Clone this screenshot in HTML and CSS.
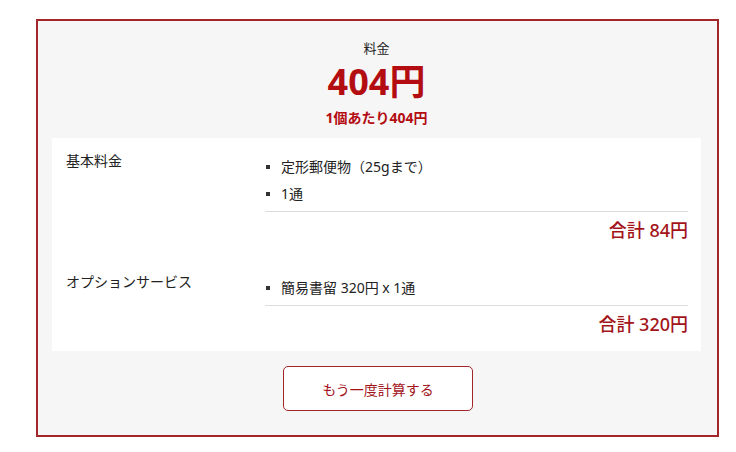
FILE: index.html
```html
<!DOCTYPE html>
<html lang="ja">
<head>
<meta charset="utf-8">
<title>料金</title>
<link rel="stylesheet" href="styles.css">
</head>
<body>
<div class="result">
  <div class="summary">
    <div class="summary-label">料金</div>
    <div class="summary-price">404円</div>
    <div class="summary-unit">1個あたり404円</div>
  </div>
  <div class="detail">
    <div class="row">
      <div class="row-label">基本料金</div>
      <div class="row-body">
        <ul class="items">
          <li>定形郵便物（25gまで）</li>
          <li>1通</li>
        </ul>
        <div class="total">合計 84円</div>
      </div>
    </div>
    <div class="row">
      <div class="row-label">オプションサービス</div>
      <div class="row-body">
        <ul class="items">
          <li>簡易書留 320円 x 1通</li>
        </ul>
        <div class="total">合計 320円</div>
      </div>
    </div>
  </div>
  <div class="actions">
    <button class="again" type="button">もう一度計算する</button>
  </div>
</div>
</body>
</html>
```

FILE: styles.css
```css
* { box-sizing: border-box; }
body {
  margin: 0;
  background: #fff;
  font-family: "Noto Sans", "Noto Sans CJK JP", sans-serif;
  color: #222;
}
.result {
  margin: 19px 0 0 36px;
  width: 683px;
  height: 418px;
  border: 2px solid #a3262a;
  background: #f6f6f6;
  padding: 0 16px 0 14px;
}
.summary {
  text-align: center;
  padding-top: 17px;
  height: 117px;
}
.summary-label {
  font-size: 13px;
  line-height: 20px;
}
.summary-price {
  font-size: 36px;
  font-weight: bold;
  color: #b30d12;
  line-height: 44px;
  margin-top: 2px;
}
.summary-unit {
  font-size: 14px;
  font-weight: bold;
  color: #b30d12;
  line-height: 20px;
  margin-top: 4px;
}
.detail {
  background: #fff;
  padding: 13px 13px 14px 14px;
}
.row {
  display: grid;
  grid-template-columns: 199px 1fr;
}
.row + .row { margin-top: 29px; }
.row-label {
  font-size: 14px;
  line-height: 20px;
}
.items {
  list-style: none;
  margin: 0;
  padding: 2px 0 4px 0;
  border-bottom: 1px solid #dcdcdc;
}
.items li {
  position: relative;
  padding-left: 16px;
  font-size: 14px;
  line-height: 27px;
}
.items li::before {
  content: "";
  position: absolute;
  left: 1px;
  top: 12px;
  width: 4px;
  height: 4px;
  background: #333;
}
.total {
  text-align: right;
  font-size: 18px;
  font-weight: 500;
  color: #a3141a;
  line-height: 26px;
  margin-top: 5px;
}
.actions {
  display: flex;
  justify-content: center;
  padding-top: 15px;
}
.again {
  width: 190px;
  height: 45px;
  background: #fff;
  border: 1px solid #a3262a;
  border-radius: 5px;
  color: #a3141a;
  font-family: inherit;
  font-size: 14px;
  margin-left: 3px;
}
```
